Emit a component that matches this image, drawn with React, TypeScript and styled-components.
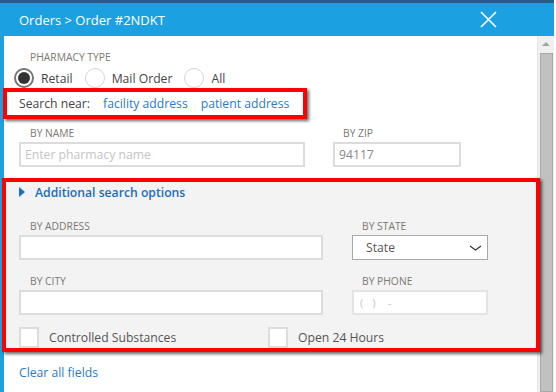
import React from 'react';
import styled, { createGlobalStyle } from 'styled-components';

const blue = '#1ba1e2';
const linkColor = '#2b7ac6';
const labelColor = '#7c7872';

const GlobalStyle = createGlobalStyle`
  body {
    margin: 0;
    background: #ffffff;
    font-family: "Open Sans", "Liberation Sans", sans-serif;
  }
`;

const Frame = styled.div`
  width: 556px;
  height: 392px;
  overflow: hidden;
  background: #fff;
`;

const Dialog = styled.div`
  width: 554px;
  height: 392px;
  border-top: 3px solid #2a5b86;
  box-sizing: border-box;
  display: flex;
  flex-direction: column;
`;

const Header = styled.div`
  height: 33px;
  flex-shrink: 0;
  background: ${blue};
  display: flex;
  align-items: center;
  justify-content: space-between;
  padding: 0 57px 0 19px;
`;

const Title = styled.div`
  color: #fff;
  font-size: 13px;
`;

const CloseIcon = () => (
  <svg width="17" height="17" viewBox="0 0 17 17">
    <path d="M1 1 L16 16 M16 1 L1 16" stroke="#fff" strokeWidth="1.6" fill="none" />
  </svg>
);

const Body = styled.div`
  flex: 1;
  display: flex;
  border-left: 4px solid ${blue};
  min-height: 0;
`;

const Content = styled.div`
  flex: 1;
  padding-top: 14px;
  display: flex;
  flex-direction: column;
`;

const Label = styled.div<{ $indent?: number }>`
  font-size: 10.3px;
  line-height: 14px;
  color: ${labelColor};
  text-transform: uppercase;
  white-space: nowrap;
  padding-left: ${p => p.$indent ?? 11}px;
`;

const Section = styled.div`
  padding-left: 15px;
`;

const RadioRow = styled.div`
  display: flex;
  align-items: center;
  height: 20px;
  margin: 4px 0 0 10px;
`;

const RadioItem = styled.label`
  display: flex;
  align-items: center;
  margin-right: 12px;
  font-size: 12.2px;
  color: #444;
`;

const RadioCircle = styled.span<{ $checked?: boolean }>`
  width: 20px;
  height: 20px;
  border-radius: 50%;
  box-sizing: border-box;
  border: ${p => (p.$checked ? '2px solid #777' : '1px solid #d4d4d4')};
  background: #fff;
  margin-right: 7px;
  display: flex;
  align-items: center;
  justify-content: center;
  &::after {
    content: '';
    display: ${p => (p.$checked ? 'block' : 'none')};
    width: 12px;
    height: 12px;
    border-radius: 50%;
    background: #333;
  }
`;

const Highlight = styled.div`
  border: 4px solid #f00;
  box-shadow: 2px 2px 3px rgba(0, 0, 0, 0.6);
  position: relative;
  z-index: 1;
`;

const SearchNear = styled(Highlight)`
  width: 304px;
  height: 31px;
  box-sizing: border-box;
  margin-left: -1px;
  padding-left: 12px;
  display: flex;
  align-items: center;
  gap: 13px;
  font-size: 12.2px;
  color: #444;
  white-space: nowrap;
`;

const Link = styled.a<{ $bold?: boolean }>`
  color: ${p => (p.$bold ? '#1a6dbf' : linkColor)};
  font-weight: ${p => (p.$bold ? 600 : 400)};
  text-decoration: none;
  white-space: nowrap;
  cursor: pointer;
`;

const FieldRow = styled.div<{ $gap: number; $top: number }>`
  display: flex;
  gap: ${p => p.$gap}px;
  margin-top: ${p => p.$top}px;
`;

const Field = styled.div<{ $width: number }>`
  width: ${p => p.$width}px;
  display: flex;
  flex-direction: column;
  gap: 2px;
`;

const Input = styled.input`
  height: 25px;
  box-sizing: border-box;
  border: 2px solid #dcdcdc;
  background: #fff;
  font-family: inherit;
  font-size: 12.2px;
  color: #888;
  padding: 0 4px;
  outline: none;
  &::placeholder {
    color: #c4c4c4;
  }
`;

const Select = styled.div`
  height: 25px;
  box-sizing: border-box;
  border: 1px solid #a9a9a9;
  background: #fff;
  display: flex;
  align-items: center;
  justify-content: space-between;
  padding: 0 5px 0 13px;
  font-size: 12.2px;
  color: #555;
`;

const Chevron = () => (
  <svg width="13" height="6" viewBox="0 0 13 6">
    <path d="M1 1 L6.5 5 L12 1" stroke="#333" strokeWidth="1.1" fill="none" />
  </svg>
);

const Phone = styled.div`
  height: 25px;
  box-sizing: border-box;
  border: 2px solid #e4e4e4;
  background: #fff;
  display: flex;
  align-items: center;
  padding-left: 6px;
  font-size: 11.5px;
  color: #c8c8c8;
  white-space: pre;
`;

const Additional = styled(Highlight)`
  margin: 11px -3px 0 -2px;
  background: #f3f3f3;
  padding: 1px 0 0 13px;
`;

const ToggleRow = styled.div`
  display: flex;
  align-items: center;
  gap: 10px;
  height: 18px;
  font-size: 12.2px;
`;

const Triangle = styled.span`
  width: 0;
  height: 0;
  border-top: 5px solid transparent;
  border-bottom: 5px solid transparent;
  border-left: 6px solid #1a6dbf;
`;

const CheckRow = styled.div`
  display: flex;
  margin-top: 12px;
  height: 21px;
`;

const CheckItem = styled.label<{ $width: number }>`
  width: ${p => p.$width}px;
  display: flex;
  align-items: center;
  gap: 10px;
  font-size: 12.2px;
  color: #555;
`;

const CheckBox = styled.span`
  width: 20px;
  height: 21px;
  box-sizing: border-box;
  border: 2px solid #dcdcdc;
  background: #fff;
`;

const ClearLink = styled(Link)`
  display: block;
  margin: 12px 0 0 15px;
  font-size: 12.2px;
  line-height: 18px;
`;

const Scrollbar = styled.div`
  width: 17px;
  flex-shrink: 0;
  background: #f0f0f0;
  border-left: 1px solid #e6e6e6;
  box-sizing: border-box;
  display: flex;
  flex-direction: column;
  align-items: center;
  padding-top: 6px;
`;

const ArrowUp = styled.span`
  width: 0;
  height: 0;
  border-left: 4px solid transparent;
  border-right: 4px solid transparent;
  border-bottom: 4px solid #a3a3a3;
`;

const Thumb = styled.div`
  margin-top: 7px;
  width: 13px;
  flex: 1;
  background: #c1c1c1;
  border: 1px solid #a8a8a8;
  box-sizing: border-box;
`;

const App = () => {
  return (
    <Frame>
      <GlobalStyle />
      <Dialog>
        <Header>
          <Title>Orders &gt; Order #2NDKT</Title>
          <CloseIcon />
        </Header>
        <Body>
          <Content>
            <Section>
              <Label>Pharmacy Type</Label>
            </Section>
            <RadioRow>
              <RadioItem><RadioCircle $checked />Retail</RadioItem>
              <RadioItem><RadioCircle />Mail Order</RadioItem>
              <RadioItem><RadioCircle />All</RadioItem>
            </RadioRow>
            <SearchNear>
              <span>Search near:</span>
              <Link>facility address</Link>
              <Link>patient address</Link>
            </SearchNear>
            <Section>
              <FieldRow $gap={28} $top={7}>
                <Field $width={286}>
                  <Label>By Name</Label>
                  <Input placeholder="Enter pharmacy name" />
                </Field>
                <Field $width={128}>
                  <Label $indent={10}>By Zip</Label>
                  <Input defaultValue="94117" />
                </Field>
              </FieldRow>
            </Section>
            <Additional>
              <ToggleRow>
                <Triangle />
                <Link $bold>Additional search options</Link>
              </ToggleRow>
              <FieldRow $gap={29} $top={18}>
                <Field $width={304}>
                  <Label>By Address</Label>
                  <Input />
                </Field>
                <Field $width={136}>
                  <Label $indent={10}>By State</Label>
                  <Select>State<Chevron /></Select>
                </Field>
              </FieldRow>
              <FieldRow $gap={29} $top={14}>
                <Field $width={304}>
                  <Label>By City</Label>
                  <Input />
                </Field>
                <Field $width={136}>
                  <Label $indent={10}>By Phone</Label>
                  <Phone>{'(   )    -'}</Phone>
                </Field>
              </FieldRow>
              <CheckRow>
                <CheckItem $width={249}><CheckBox />Controlled Substances</CheckItem>
                <CheckItem $width={200}><CheckBox />Open 24 Hours</CheckItem>
              </CheckRow>
            </Additional>
            <ClearLink>Clear all fields</ClearLink>
          </Content>
          <Scrollbar>
            <ArrowUp />
            <Thumb />
          </Scrollbar>
        </Body>
      </Dialog>
    </Frame>
  );
};

export default App;
